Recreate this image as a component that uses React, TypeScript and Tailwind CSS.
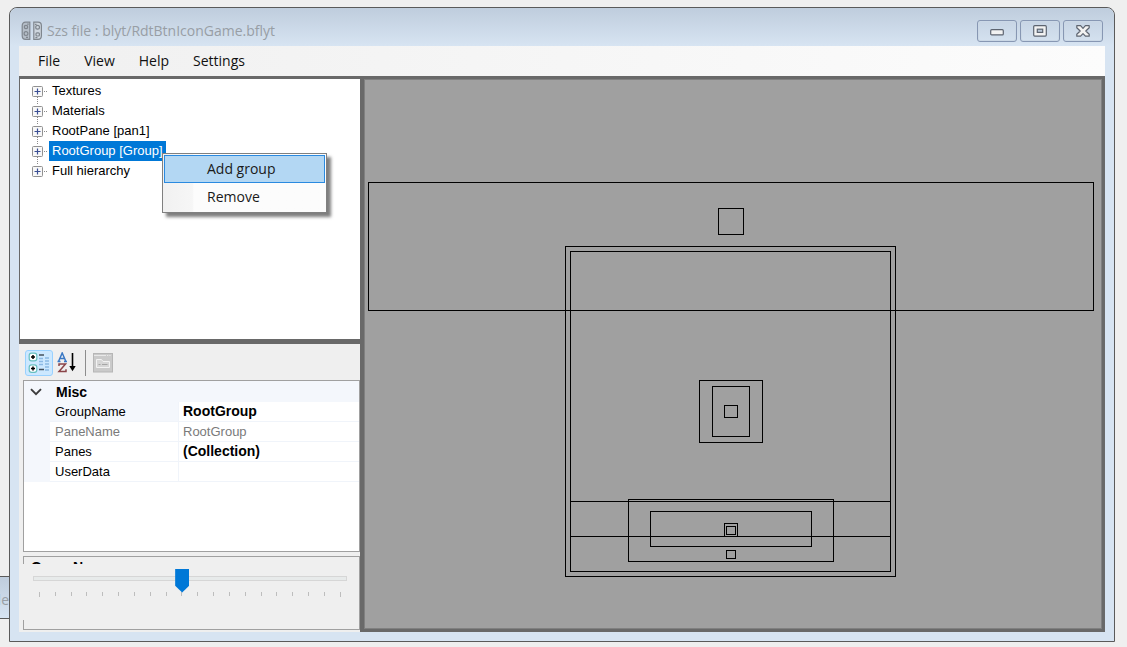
import { useState } from "react";

const menus = ["File", "View", "Help", "Settings"];

const treeNodes = [
  "Textures",
  "Materials",
  "RootPane [pan1]",
  "RootGroup [Group]",
  "Full hierarchy",
];

const properties = [
  { name: "GroupName", value: "RootGroup", readOnly: false },
  { name: "PaneName", value: "RootGroup", readOnly: true },
  { name: "Panes", value: "(Collection)", readOnly: false },
  { name: "UserData", value: "", readOnly: false },
];

// left, top, right, bottom of every pane outline
const panes = [
  [368, 182, 1093, 310],
  [718, 208, 743, 234],
  [565, 246, 895, 576],
  [570, 251, 890, 571],
  [699, 380, 762, 442],
  [712, 386, 749, 436],
  [724, 405, 737, 417],
  [570, 501, 890, 536],
  [628, 499, 833, 561],
  [650, 511, 811, 546],
  [724, 523, 737, 536],
  [726, 526, 735, 534],
  [726, 550, 735, 558],
];

const TitleBar = () => {
  return (
    <header className="flex h-[38px] items-center rounded-t-lg bg-linear-to-b from-[#bfcddd] to-[#d7e4f2] px-[11px] pt-2">
      <svg width="22" height="20" viewBox="0 0 22 20" fill="none" stroke="#7f868e" strokeWidth="1.2">
        <path d="M8.8 1.2H4.6Q1.2 1.2 1.2 4.8v10q0 3.6 3.4 3.6h4.2z" fill="#b4bdc7" />
        <path d="M12.8 1.2H17q3.4 0 3.4 3.6v10q0 3.6-3.4 3.6h-4.2z" fill="#ced6de" />
        <circle cx="5" cy="6" r="1.7" />
        <circle cx="5" cy="12.6" r="1.9" />
        <path d="M6.2 3.2h1.5M5 16.4h2" />
        <circle cx="16.6" cy="6.2" r="1.9" />
        <rect x="15" y="11.8" width="3.4" height="3.2" rx="1" />
        <path d="M14 3.4h1.6M14.4 16.6h2" />
      </svg>
      <h1 className="ml-1 flex-1 text-sm text-[#989ea5]">
        Szs file : blyt/RdtBtnIconGame.bflyt
      </h1>
      <div className="flex gap-[3px]">
        <button
          aria-label="Minimize"
          className="flex h-[22px] w-10 items-center justify-center rounded-[3px] border border-[#8797b3] shadow-[inset_0_0_0_1px_#cbd8e6]"
        >
          <svg width="14" height="14" viewBox="0 0 14 14">
            <rect x="0.7" y="5.7" width="12.6" height="5.2" rx="1" fill="#f2f2f2" stroke="#5d6470" strokeWidth="1.2" />
          </svg>
        </button>
        <button
          aria-label="Maximize"
          className="flex h-[22px] w-10 items-center justify-center rounded-[3px] border border-[#8797b3] shadow-[inset_0_0_0_1px_#cbd8e6]"
        >
          <svg width="14" height="14" viewBox="0 0 14 14" stroke="#5d6470" strokeWidth="1.2">
            <rect x="0.7" y="1.7" width="12.6" height="10.4" rx="1" fill="#f2f2f2" />
            <rect x="4.3" y="5.2" width="5.4" height="3.2" fill="#b9c7d8" />
          </svg>
        </button>
        <button
          aria-label="Close"
          className="flex h-[22px] w-10 items-center justify-center rounded-[3px] border border-[#8797b3] shadow-[inset_0_0_0_1px_#cbd8e6]"
        >
          <svg width="14" height="14" viewBox="0 0 14 14">
            <path
              d="M.8 1.7h3.8L7 4.3l2.4-2.6h3.8v2L9.8 7l3.4 3.2v2H9.4L7 9.6l-2.4 2.6H.8v-2L4.2 7 .8 3.7z"
              fill="#f2f2f2"
              stroke="#5d6470"
              strokeWidth="1.2"
              strokeLinejoin="round"
            />
          </svg>
        </button>
      </div>
    </header>
  );
};

const ContextMenu = () => {
  return (
    <div
      role="menu"
      className="absolute left-[142px] top-3 z-10 flex w-[165px] flex-col border border-[#808080] bg-linear-to-r from-[#f1f1f1] from-0% via-[#f6f6f6] via-18% to-[#fcfcfc] to-19% p-px font-['Open_Sans','Noto_Sans',sans-serif] text-sm text-[#1a1a1a] shadow-[4px_4px_3px_rgba(0,0,0,0.5)]"
    >
      <button role="menuitem" className="h-7 border border-[#2a8ae0] bg-[#b3d7f3] pl-[42px] text-left">
        Add group
      </button>
      <button role="menuitem" className="h-7 border border-transparent pl-[42px] text-left">
        Remove
      </button>
    </div>
  );
};

const TreeView = () => {
  const [selected, setSelected] = useState("RootGroup [Group]");

  return (
    <div className="ml-px h-[260px] shrink-0 bg-white pt-0.5">
      <ul role="tree">
        {treeNodes.map((node, i) => (
          <li
            key={node}
            role="treeitem"
            aria-selected={selected === node}
            className="relative flex h-5 items-center pl-3"
          >
            <svg width="17" height="20" viewBox="0 0 17 20" className="shrink-0" fill="none">
              {i > 0 && <path d="M5.5 0v4" stroke="#8a8a8a" strokeDasharray="1 1" />}
              {i < treeNodes.length - 1 && (
                <path d="M5.5 16v4" stroke="#8a8a8a" strokeDasharray="1 1" />
              )}
              <path d="M12 10.5h4" stroke="#8a8a8a" strokeDasharray="1 1" />
              <rect x="0.5" y="5.5" width="10" height="10" rx="1" fill="#f8f8f8" stroke="#919191" />
              <path d="M2.5 10.5h6M5.5 7.5v6" stroke="#3b4f94" strokeWidth="1.2" />
            </svg>
            <button
              onClick={() => setSelected(node)}
              className={`h-5 px-[3px] whitespace-nowrap ${
                selected === node ? "bg-[#0078d7] text-white" : "text-black"
              }`}
            >
              {node}
            </button>
            {node === "RootGroup [Group]" && <ContextMenu />}
          </li>
        ))}
      </ul>
    </div>
  );
};

const PropertyToolbar = () => {
  return (
    <div className="flex h-9 shrink-0 items-center pl-1.5 pt-0.5">
      <button
        aria-label="Categorized"
        className="flex h-[26px] w-7 items-center justify-center rounded-[3px] border border-[#99d1ff] bg-[#cce8ff]"
      >
        <svg width="22" height="22" viewBox="0 0 22 22" fill="none">
          <rect x="1.2" y="1.2" width="7.6" height="7.6" rx="2.4" fill="#fff" stroke="#67bfc0" strokeWidth="1.2" />
          <rect x="1.2" y="12.8" width="7.6" height="7.6" rx="2.4" fill="#fff" stroke="#67bfc0" strokeWidth="1.2" />
          <path d="M3 5h4M5 3v4M3 16.6h4M5 14.6v4" stroke="#000" strokeWidth="1.5" />
          <path d="M11 3h5M11 17.5h5" stroke="#44505c" strokeWidth="1.4" />
          <path
            d="M11 6.5h4M11 9.5h4M11 12.5h4M17 6h4M17 9h4M17 12h4M17 15h4M17 18h4"
            stroke="#8bb9e4"
            strokeWidth="1.3"
          />
        </svg>
      </button>
      <button aria-label="Alphabetical" className="flex h-[26px] w-7 items-center justify-center">
        <svg width="20" height="22" viewBox="0 0 20 22" fill="none">
          <path d="M1.5 9.5l3.7-8.5 3.7 8.5M3 6.6h4.6M.5 9.5h3M7 9.5h3" stroke="#3a78c4" strokeWidth="1.5" />
          <path d="M2 14v-2h6.5L2 19.4h7v-2.2" stroke="#8a4448" strokeWidth="1.5" />
          <path d="M15.5 1v15" stroke="#000" strokeWidth="1.6" />
          <path d="M12.3 14h6.4l-3.2 5.2z" fill="#000" />
        </svg>
      </button>
      <div className="mx-1 h-[26px] w-px bg-[#8d8d8d]" />
      <button aria-label="Property pages" disabled className="ml-[3px] flex h-[26px] w-5 items-center">
        <svg width="20" height="20" viewBox="0 0 20 20" fill="none">
          <rect x="0.5" y="0.5" width="19" height="18.5" fill="#cacaca" stroke="#b6b6b6" />
          <path d="M1 2.5h12M14 2.5h1.3M16.3 2.5h1.3" stroke="#e8e8e8" />
          <path d="M3.5 14.5V6.5h5l1.5 2h6.5v6z" fill="#d6d6d6" stroke="#f2f2f2" />
          <path d="M5.5 11.5h2M9 11.5h5.5" stroke="#a5a5a5" />
        </svg>
      </button>
    </div>
  );
};

const PropertyGrid = () => {
  return (
    <div className="ml-1 h-[172px] shrink-0 border border-[#a0a0a0] bg-white">
      <table className="w-full table-fixed border-separate border-spacing-0 text-left">
        <colgroup>
          <col className="w-[26px]" />
          <col className="w-[129px]" />
          <col />
        </colgroup>
        <thead>
          <tr className="h-[21px] bg-[#f4f7fc]">
            <th className="p-0">
              <svg width="12" height="8" viewBox="0 0 12 8" className="ml-1.5" fill="none">
                <path d="M1 1.2l5 5 5-5" stroke="#3c3c3c" strokeWidth="1.9" />
              </svg>
            </th>
            <th colSpan={2} className="p-0 pl-1.5 text-sm leading-5 font-bold">
              Misc
            </th>
          </tr>
        </thead>
        <tbody>
          {properties.map((prop) => (
            <tr
              key={prop.name}
              className={`h-5 leading-[19px] ${prop.readOnly ? "text-[#7a7a7a]" : "text-black"}`}
            >
              <td className="bg-[#f4f7fc] p-0" />
              <th
                scope="row"
                className={`border-r border-b border-[#f0f4fa] p-0 pl-[5px] font-normal ${
                  prop.name === "GroupName" ? "bg-[#f4f7fc]" : ""
                }`}
              >
                {prop.name}
              </th>
              <td
                className={`border-b border-[#f0f4fa] p-0 pl-1 ${
                  prop.readOnly ? "" : "text-sm leading-[19px] font-bold"
                }`}
              >
                {prop.value}
              </td>
            </tr>
          ))}
        </tbody>
      </table>
    </div>
  );
};

const ZoomSlider = () => {
  const [zoom, setZoom] = useState(9);

  return (
    <div className="absolute -left-1 right-0 top-[7px] h-14 bg-[#efefef] pl-[13px] pr-3 pt-0.5">
      <input
        type="range"
        aria-label="Zoom"
        min={0}
        max={19}
        value={zoom}
        onChange={(e) => setZoom(Number(e.target.value))}
        className="block h-6 w-full appearance-none bg-transparent [&::-webkit-slider-runnable-track]:h-[5px] [&::-webkit-slider-runnable-track]:border [&::-webkit-slider-runnable-track]:border-[#d6d6d6] [&::-webkit-slider-runnable-track]:bg-[#e7eaea] [&::-webkit-slider-thumb]:-mt-2 [&::-webkit-slider-thumb]:h-6 [&::-webkit-slider-thumb]:w-3.5 [&::-webkit-slider-thumb]:appearance-none [&::-webkit-slider-thumb]:bg-[#0078d7] [&::-webkit-slider-thumb]:[clip-path:polygon(0_0,100%_0,100%_72%,50%_100%,0_72%)]"
      />
      <div className="mt-0.5 flex justify-between px-1.5">
        {Array.from({ length: 20 }, (_, i) => (
          <span key={i} className="h-1 w-px bg-[#bdbdbd] first:h-[5px] last:h-[5px]" />
        ))}
      </div>
    </div>
  );
};

const LayoutCanvas = () => {
  return (
    <div className="min-w-0 flex-1 border border-[#808080] bg-[#a0a0a0]">
      <svg viewBox="364.5 79.5 736 548" className="block h-full w-full" fill="none" stroke="#000">
        {panes.map(([left, top, right, bottom], i) => (
          <rect key={i} x={left} y={top} width={right - left} height={bottom - top} />
        ))}
      </svg>
    </div>
  );
};

const App = () => {
  return (
    <div className="relative flex min-h-screen bg-[#efefef] pb-[5px] pl-[9px] pr-3 pt-[7px] font-['Open_Sans','Noto_Sans',sans-serif]">
      {/* window behind */}
      <div className="absolute left-0 top-[576px] flex h-[43px] w-[9px] items-center justify-end overflow-hidden border-y border-[#5a5a5a] bg-linear-to-b from-[#bfcddd] to-[#d7e4f2] pt-1 text-sm text-[#989ea5]">
        le
      </div>

      <div className="relative flex min-w-0 flex-1 flex-col rounded-t-lg border border-[#5a5a5a] bg-[#d7e4f2]">
        <TitleBar />
        <main className="mx-[9px] mb-[9px] flex flex-1 flex-col">
          <nav className="flex h-[30px] items-center gap-6 bg-linear-to-r from-[#f0f0f0] to-[#fcfcfc] pl-[19px] text-sm text-[#101010]">
            {menus.map((menu) => (
              <button key={menu}>{menu}</button>
            ))}
          </nav>

          <div className="flex flex-1 gap-1 bg-[#696969] py-[3px] pr-[3px]">
            <aside className="-mb-[3px] flex w-[341px] shrink-0 flex-col font-['Liberation_Sans',Arial,sans-serif] text-[13px]">
              <TreeView />
              <div className="mt-[5px] flex flex-1 flex-col bg-[#efefef]">
                <PropertyToolbar />
                <PropertyGrid />
                <div className="relative mb-0.5 ml-1 mt-1 flex-1 border border-[#a0a0a0]">
                  <p className="h-[7px] overflow-hidden pl-[7px] pt-0.5 text-sm leading-4 font-bold">
                    GroupName
                  </p>
                  <ZoomSlider />
                </div>
              </div>
            </aside>
            <LayoutCanvas />
          </div>
        </main>
      </div>
    </div>
  );
};

export default App;
